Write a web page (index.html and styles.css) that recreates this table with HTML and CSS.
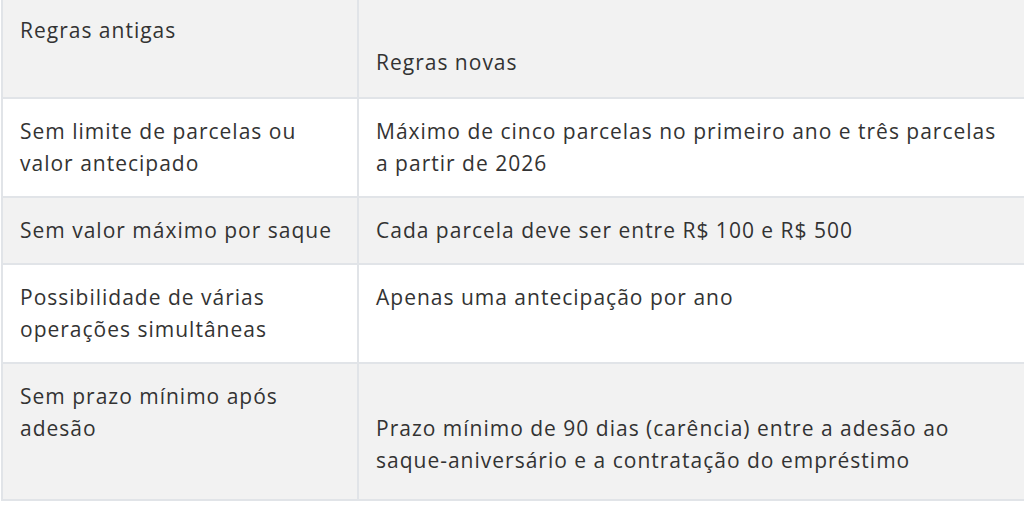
FILE: index.html
```html
<!DOCTYPE html>
<html lang="pt-BR">
<head>
<meta charset="utf-8">
<link rel="stylesheet" href="styles.css">
</head>
<body>
<table class="rules">
  <tr class="row row-gray row-head">
    <td class="cell cell-left">Regras antigas</td>
    <td class="cell cell-right"><br>Regras novas</td>
  </tr>
  <tr class="row row-white">
    <td class="cell cell-left">Sem limite de parcelas ou valor antecipado</td>
    <td class="cell cell-right">Máximo de cinco parcelas no primeiro ano e três parcelas a partir de 2026</td>
  </tr>
  <tr class="row row-gray">
    <td class="cell cell-left">Sem valor máximo por saque</td>
    <td class="cell cell-right">Cada parcela deve ser entre R$ 100 e R$ 500</td>
  </tr>
  <tr class="row row-white">
    <td class="cell cell-left">Possibilidade de várias operações simultâneas</td>
    <td class="cell cell-right">Apenas uma antecipação por ano</td>
  </tr>
  <tr class="row row-gray row-last">
    <td class="cell cell-left">Sem prazo mínimo após adesão</td>
    <td class="cell cell-right"><br>Prazo mínimo de 90 dias (carência) entre a adesão ao saque-aniversário e a contratação do empréstimo</td>
  </tr>
</table>
</body>
</html>
```

FILE: styles.css
```css
html, body {
  margin: 0;
  padding: 0;
  background: #ffffff;
}

body {
  font-family: "Open Sans", "Noto Sans", sans-serif;
  font-size: 21px;
  letter-spacing: 1px;
  color: #333333;
  padding: 0 0 0 1px;
  overflow: hidden;
}

.rules {
  border-collapse: collapse;
  width: 1060px;
  margin-top: -4px;
  table-layout: fixed;
}

.cell {
  border: 2px solid #e1e4e8;
  vertical-align: top;
  line-height: 32px;
  padding: 16px 17px 17px 17px;
}

.cell-left {
  width: 320px;
}

.cell-right {
  padding-right: 54px;
}

.row-head .cell {
  padding-bottom: 19px;
}

.row-last .cell {
  padding-bottom: 23px;
}

.row-gray {
  background: #f2f2f2;
}

.row-white {
  background: #ffffff;
}
```
